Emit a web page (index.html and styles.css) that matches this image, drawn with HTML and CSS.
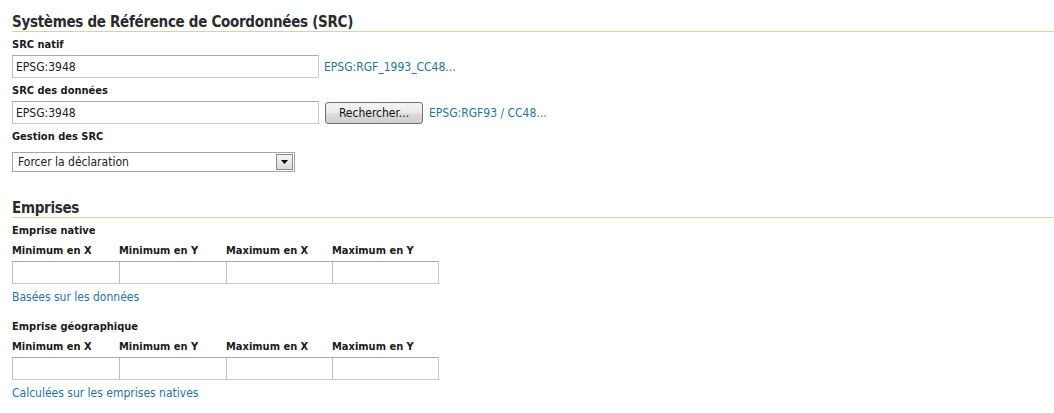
FILE: index.html
```html
<!DOCTYPE html>
<html lang="fr">
<head>
<meta charset="utf-8">
<title>SRC</title>
<link rel="stylesheet" href="styles.css">
</head>
<body>
<div class="page">
  <section class="group">
    <h2 class="group-title">Systèmes de Référence de Coordonnées (SRC)</h2>
    <div class="field">
      <div class="field-label">SRC natif</div>
      <div class="row">
        <input class="text-input srs" type="text" value="EPSG:3948">
        <a class="link" href="#">EPSG:RGF_1993_CC48...</a>
      </div>
    </div>
    <div class="field">
      <div class="field-label">SRC des données</div>
      <div class="row">
        <input class="text-input srs" type="text" value="EPSG:3948">
        <button class="btn" type="button">Rechercher...</button>
        <a class="link" href="#">EPSG:RGF93 / CC48...</a>
      </div>
    </div>
    <div class="field">
      <div class="field-label">Gestion des SRC</div>
      <div class="select">
        <span class="select-value">Forcer la déclaration</span>
        <span class="select-arrow"><svg width="7" height="4" viewBox="0 0 7 4"><path d="M0 0h7L3.5 4z" fill="#000"/></svg></span>
      </div>
    </div>
  </section>

  <section class="group group-extents">
    <h2 class="group-title">Emprises</h2>
    <div class="field">
      <div class="field-label">Emprise native</div>
      <div class="extent">
        <div class="extent-label">Minimum en X</div>
        <div class="extent-label">Minimum en Y</div>
        <div class="extent-label">Maximum en X</div>
        <div class="extent-label">Maximum en Y</div>
        <input class="text-input extent-input" type="text">
        <input class="text-input extent-input" type="text">
        <input class="text-input extent-input" type="text">
        <input class="text-input extent-input" type="text">
      </div>
      <a class="link link-block" href="#">Basées sur les données</a>
    </div>
    <div class="field field-geo">
      <div class="field-label">Emprise géographique</div>
      <div class="extent">
        <div class="extent-label">Minimum en X</div>
        <div class="extent-label">Minimum en Y</div>
        <div class="extent-label">Maximum en X</div>
        <div class="extent-label">Maximum en Y</div>
        <input class="text-input extent-input" type="text">
        <input class="text-input extent-input" type="text">
        <input class="text-input extent-input" type="text">
        <input class="text-input extent-input" type="text">
      </div>
      <a class="link link-block" href="#">Calculées sur les emprises natives</a>
    </div>
  </section>
</div>
</body>
</html>
```

FILE: styles.css
```css
* { box-sizing: border-box; }
html, body { margin: 0; padding: 0; background: #fff; }
body {
  font-family: "DejaVu Sans", Verdana, sans-serif;
  font-stretch: condensed;
  color: #222;
  font-size: 12px;
}
.page { padding: 14px 0 0 12px; }

.group-title {
  margin: 0;
  font-size: 15px;
  line-height: 17px;
  font-weight: bold;
  letter-spacing: -0.3px;
  color: #2b2b2b;
  border-bottom: 1px solid #c6dba8;
  padding-bottom: 0;
}
.group-extents { margin-top: 28px; }

.field-label {
  font-size: 11px;
  font-weight: bold;
  line-height: 14px;
  margin-top: 6px;
  margin-bottom: 3px;
  color: #1a1a1a;
}
.row {
  display: flex;
  align-items: center;
  gap: 5px;
}
.text-input {
  font-family: inherit;
  font-stretch: condensed;
  font-size: 12px;
  color: #222;
  height: 23px;
  padding: 0 3px;
  margin: 0;
  border: 1px solid #cbcbcb;
  border-top-color: #a8a8a8;
  border-left-color: #bdbdbd;
  background: #fff;
  outline: none;
}
.srs { width: 307px; }
.link {
  color: #1c76a8;
  text-decoration: none;
  font-size: 12px;
}
.btn {
  font-family: inherit;
  font-stretch: condensed;
  font-size: 12px;
  color: #111;
  height: 22px;
  width: 98px;
  margin: 0 1px;
  padding: 0;
  border: 1px solid #707070;
  border-radius: 3px;
  background: linear-gradient(#f4f4f4 0%, #ebebeb 50%, #dddddd 51%, #cfcfcf 100%);
}
.select {
  display: flex;
  align-items: center;
  width: 283px;
  height: 20px;
  margin-top: 8px;
  border: 1px solid #a5a5a5;
  background: #fff;
  padding: 1px;
}
.select-value {
  flex: 1;
  padding-left: 4px;
  font-size: 12px;
  line-height: 16px;
}
.select-arrow {
  width: 17px;
  height: 16px;
  border: 1px solid #8a8a8a;
  background: linear-gradient(#f6f6f6, #d9d9d9);
  display: flex;
  align-items: center;
  justify-content: center;
}

.extent {
  display: grid;
  grid-template-columns: 107px 107px 106px 107px;
  margin-top: 6px;
}
.extent-label {
  font-size: 11px;
  font-weight: bold;
  line-height: 14px;
  margin-bottom: 3px;
  color: #1a1a1a;
}
.extent-input { width: calc(100% + 1px); margin-right: -1px; }
.extent-input:nth-of-type(4) { width: 100%; margin-right: 0; }
.link-block {
  display: block;
  margin-top: 6px;
  line-height: 14px;
}
.field-geo { margin-top: 16px; }
```
